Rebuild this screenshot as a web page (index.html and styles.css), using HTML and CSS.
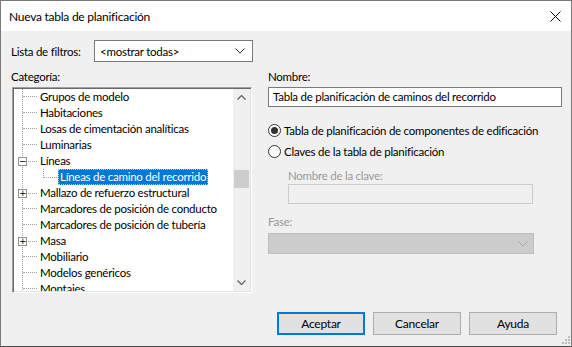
FILE: index.html
```html
<!DOCTYPE html>
<html lang="es">
<head>
    <meta charset="UTF-8">
    <title>Nueva tabla de planificación</title>
    <link rel="stylesheet" href="styles.css">
</head>
<body>
    <div class="window">
        <div class="titlebar">
            <span class="title">Nueva tabla de planificación</span>
            <svg class="close" width="11" height="11" viewBox="0 0 11 11">
                <path d="M0.5 0.5 L10.5 10.5 M10.5 0.5 L0.5 10.5" stroke="#000" stroke-width="1" fill="none"/>
            </svg>
        </div>
        <div class="content">
            <div class="filter-row">
                <label class="filter-label">Lista de filtros:</label>
                <div class="combo">
                    <span>&lt;mostrar todas&gt;</span>
                    <svg width="10" height="6" viewBox="0 0 10 6"><path d="M0.5 0.5 L5 5 L9.5 0.5" stroke="#333" fill="none"/></svg>
                </div>
            </div>
            <div class="main">
                <div class="left">
                    <div class="caption">Categoría:</div>
                    <div class="tree">
                        <ul class="tree-list">
                            <li class="row"><span class="gutter"><span class="branch"></span></span><span class="label">Grupos de modelo</span></li>
                            <li class="row"><span class="gutter"><span class="branch"></span></span><span class="label">Habitaciones</span></li>
                            <li class="row"><span class="gutter"><span class="branch"></span></span><span class="label">Losas de cimentación analíticas</span></li>
                            <li class="row"><span class="gutter"><span class="branch"></span></span><span class="label">Luminarias</span></li>
                            <li class="row"><span class="gutter"><span class="toggle">&minus;</span><span class="branch short"></span></span><span class="label">Líneas</span></li>
                            <li class="row child"><span class="gutter"><span class="branch elbow"></span></span><span class="label selected">Líneas de camino del recorrido</span></li>
                            <li class="row"><span class="gutter"><span class="toggle">+</span><span class="branch short"></span></span><span class="label">Mallazo de refuerzo estructural</span></li>
                            <li class="row"><span class="gutter"><span class="branch"></span></span><span class="label">Marcadores de posición de conducto</span></li>
                            <li class="row"><span class="gutter"><span class="branch"></span></span><span class="label">Marcadores de posición de tubería</span></li>
                            <li class="row"><span class="gutter"><span class="toggle">+</span><span class="branch short"></span></span><span class="label">Masa</span></li>
                            <li class="row"><span class="gutter"><span class="branch"></span></span><span class="label">Mobiliario</span></li>
                            <li class="row"><span class="gutter"><span class="branch"></span></span><span class="label">Modelos genéricos</span></li>
                            <li class="row"><span class="gutter"><span class="branch"></span></span><span class="label">Montajes</span></li>
                        </ul>
                        <div class="scrollbar">
                            <div class="arrow">
                                <svg width="9" height="5" viewBox="0 0 9 5"><path d="M0.5 4.5 L4.5 0.5 L8.5 4.5" stroke="#606060" stroke-width="1.2" fill="none"/></svg>
                            </div>
                            <div class="track"><div class="thumb"></div></div>
                            <div class="arrow">
                                <svg width="9" height="5" viewBox="0 0 9 5"><path d="M0.5 0.5 L4.5 4.5 L8.5 0.5" stroke="#606060" stroke-width="1.2" fill="none"/></svg>
                            </div>
                        </div>
                    </div>
                </div>
                <div class="right">
                    <div class="caption">Nombre:</div>
                    <div class="textbox">Tabla de planificación de caminos del recorrido</div>
                    <div class="radio first"><span class="dot checked"></span>Tabla de planificación de componentes de edificación</div>
                    <div class="radio"><span class="dot"></span>Claves de la tabla de planificación</div>
                    <div class="caption disabled indent key-label">Nombre de la clave:</div>
                    <div class="textbox off indent"></div>
                    <div class="caption disabled phase-label">Fase:</div>
                    <div class="combo off wide">
                        <span></span>
                        <svg width="10" height="6" viewBox="0 0 10 6"><path d="M0.5 0.5 L5 5 L9.5 0.5" stroke="#a6a6a6" fill="none"/></svg>
                    </div>
                </div>
            </div>
            <div class="footer">
                <button class="btn default">Aceptar</button>
                <button class="btn">Cancelar</button>
                <button class="btn">Ayuda</button>
                <svg class="grip" width="8" height="8" viewBox="0 0 8 8">
                    <rect x="6" y="0" width="2" height="2" fill="#bcbcbc"/>
                    <rect x="3" y="3" width="2" height="2" fill="#bcbcbc"/>
                    <rect x="6" y="3" width="2" height="2" fill="#bcbcbc"/>
                    <rect x="0" y="6" width="2" height="2" fill="#bcbcbc"/>
                    <rect x="3" y="6" width="2" height="2" fill="#bcbcbc"/>
                    <rect x="6" y="6" width="2" height="2" fill="#bcbcbc"/>
                </svg>
            </div>
        </div>
    </div>
</body>
</html>
```

FILE: styles.css
```css
html, body {
    margin: 0;
    padding: 0;
}
body {
    font-family: Lato, "Liberation Sans", sans-serif;
    font-size: 11.5px;
    letter-spacing: -0.25px;
    color: #000;
    background: #fff;
}
.window {
    width: 572px;
    height: 347px;
    box-sizing: border-box;
    border: 1px solid #7a7a7a;
    border-bottom-color: #4a4a4a;
    background: #f0f0f0;
    display: flex;
    flex-direction: column;
}
.titlebar {
    height: 30px;
    background: #fff;
    display: flex;
    align-items: center;
    padding-left: 8px;
    padding-right: 10px;
}
.title {
    flex: 1;
    font-size: 12px;
}
.close {
    display: block;
}
.content {
    padding: 9px 0 0 10px;
}
.filter-row {
    display: flex;
    align-items: center;
    height: 22px;
}
.filter-label {
    width: 83px;
}
.combo {
    width: 159px;
    height: 22px;
    box-sizing: border-box;
    border: 1px solid #7a7a7a;
    background: #fff;
    display: flex;
    align-items: center;
    justify-content: space-between;
    padding: 0 7px 0 5px;
}
.main {
    display: grid;
    grid-template-columns: 241px 294px;
    column-gap: 16px;
    margin-top: 7px;
}
.caption {
    height: 16px;
    line-height: 16px;
    margin-bottom: 2px;
}
.tree {
    margin-left: 1px;
    height: 206px;
    box-sizing: border-box;
    border-top: 1px solid #a0a0a0;
    border-left: 1px solid #a0a0a0;
    border-right: 1px solid #fff;
    border-bottom: 1px solid #fff;
    box-shadow: inset 1px 1px 0 #696969, inset -1px -1px 0 #e3e3e3;
    padding: 1px;
    background: #fff;
    display: flex;
}
.tree-list {
    list-style: none;
    margin: 0;
    padding: 0;
    flex: 1;
    overflow: hidden;
    background-image: repeating-linear-gradient(to bottom, #a0a0a0 0 1px, transparent 1px 2px);
    background-size: 1px 100%;
    background-position: 8px 0;
    background-repeat: no-repeat;
}
.row {
    height: 16px;
    display: flex;
    align-items: center;
    white-space: nowrap;
}
.gutter {
    width: 24px;
    height: 16px;
    flex-shrink: 0;
    display: flex;
    align-items: center;
    padding-left: 9px;
    box-sizing: border-box;
}
.child .gutter {
    width: 44px;
    padding-left: 29px;
    align-items: flex-start;
}
.branch {
    width: 14px;
    height: 8px;
    box-sizing: border-box;
    border-bottom: 1px dotted #a0a0a0;
    align-self: flex-start;
}
.branch.short {
    width: 10px;
    margin-left: 1px;
    align-self: auto;
    height: 1px;
    border: none;
    background-image: repeating-linear-gradient(to right, #a0a0a0 0 1px, transparent 1px 2px);
}
.branch.elbow {
    border-left: 1px dotted #a0a0a0;
    height: 9px;
}
.toggle {
    width: 9px;
    height: 9px;
    box-sizing: border-box;
    margin-left: -5px;
    border: 1px solid #919191;
    background: #fff;
    font-family: "DejaVu Sans", sans-serif;
    font-size: 9px;
    letter-spacing: 0;
    line-height: 7px;
    text-align: center;
    color: #000;
}
.label {
    padding: 0 2px 1px;
    height: 16px;
    line-height: 15px;
    box-sizing: border-box;
}
.label.selected {
    background: #0078d7;
    color: #fff;
    outline: 1px dotted #9fc9ee;
    outline-offset: -1px;
}
.scrollbar {
    width: 17px;
    background: #f0f0f0;
    display: flex;
    flex-direction: column;
}
.arrow {
    height: 17px;
    display: flex;
    align-items: center;
    justify-content: center;
}
.track {
    flex: 1;
}
.thumb {
    margin-top: 64px;
    height: 18px;
    margin-left: 1px;
    margin-right: 1px;
    background: #cdcdcd;
}
.textbox {
    height: 20px;
    box-sizing: border-box;
    border: 1px solid #7a7a7a;
    background: #fff;
    line-height: 18px;
    padding-left: 4px;
    white-space: nowrap;
}
.radio {
    display: flex;
    align-items: center;
    height: 16px;
    margin-top: 5px;
    white-space: nowrap;
}
.radio.first {
    margin-top: 15px;
}
.dot {
    width: 13px;
    height: 13px;
    box-sizing: border-box;
    border: 1px solid #333;
    border-radius: 50%;
    background: #fff;
    margin-right: 3px;
    flex-shrink: 0;
    display: flex;
    align-items: center;
    justify-content: center;
}
.dot.checked::after {
    content: "";
    width: 7px;
    height: 7px;
    border-radius: 50%;
    background: #333;
}
.disabled {
    color: #9a9a9a;
}
.indent {
    margin-left: 20px;
}
.key-label {
    margin-top: 9px;
    margin-bottom: 0;
}
.textbox.off {
    width: 245px;
    border-color: #cccccc;
    background: #f0f0f0;
}
.phase-label {
    margin-top: 10px;
    margin-bottom: 3px;
}
.combo.wide {
    width: 266px;
    height: 21px;
    border-color: #bfbfbf;
    background: #cccccc;
    padding-right: 5px;
}
.footer {
    display: flex;
    justify-content: flex-end;
    align-items: flex-end;
    gap: 8px;
    margin-top: 19px;
}
.btn {
    width: 88px;
    height: 23px;
    box-sizing: border-box;
    border: 1px solid #adadad;
    background: #e1e1e1;
    font-family: inherit;
    font-size: 12px;
    letter-spacing: inherit;
    color: #000;
    padding: 0;
}
.btn.default {
    border: 2px solid #0078d7;
}
.grip {
    display: block;
    margin-left: -3px;
    margin-right: 1px;
    margin-bottom: -9px;
}
```
